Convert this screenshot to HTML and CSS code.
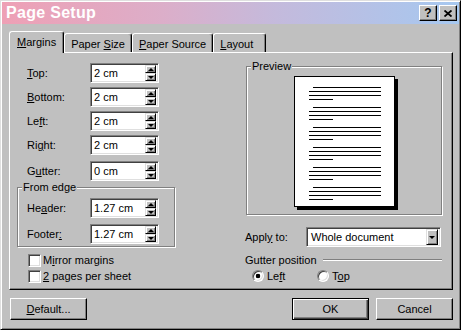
FILE: index.html
```html
<!DOCTYPE html>
<html lang="en">
<head>
    <meta charset="UTF-8">
    <title>Page Setup</title>
    <link rel="stylesheet" href="styles.css">
</head>
<body>
    <div class="dialog">
        <!-- Title bar -->
        <div class="titlebar">
            <span class="title">Page Setup</span>
            <div class="caption-buttons">
                <div class="cap-btn">?</div>
                <div class="cap-btn">
                    <svg width="8" height="7" viewBox="0 0 8 7"><path d="M0.5 0.5 L7.5 6.5 M7.5 0.5 L0.5 6.5" stroke="#000" stroke-width="1.8"/></svg>
                </div>
            </div>
        </div>

        <div class="dialog-body">
            <!-- Tabs -->
            <div class="tabs">
                <div class="tab active"><span><u>M</u>argins</span></div>
                <div class="tab"><span>Paper <u>S</u>ize</span></div>
                <div class="tab"><span><u>P</u>aper Source</span></div>
                <div class="tab last"><span><u>L</u>ayout</span></div>
            </div>

            <div class="panel">
                <!-- Left column: margins -->
                <div class="col-left">
                    <div class="field">
                        <span class="field-label"><u>T</u>op:</span>
                        <div class="spin"><span class="spin-value">2 cm</span><div class="spin-btns"><div class="spin-btn up"></div><div class="spin-btn down"></div></div></div>
                    </div>
                    <div class="field">
                        <span class="field-label"><u>B</u>ottom:</span>
                        <div class="spin"><span class="spin-value">2 cm</span><div class="spin-btns"><div class="spin-btn up"></div><div class="spin-btn down"></div></div></div>
                    </div>
                    <div class="field">
                        <span class="field-label">Le<u>f</u>t:</span>
                        <div class="spin"><span class="spin-value">2 cm</span><div class="spin-btns"><div class="spin-btn up"></div><div class="spin-btn down"></div></div></div>
                    </div>
                    <div class="field">
                        <span class="field-label">Ri<u>g</u>ht:</span>
                        <div class="spin"><span class="spin-value">2 cm</span><div class="spin-btns"><div class="spin-btn up"></div><div class="spin-btn down"></div></div></div>
                    </div>
                    <div class="field gutter">
                        <span class="field-label">G<u>u</u>tter:</span>
                        <div class="spin"><span class="spin-value">0 cm</span><div class="spin-btns"><div class="spin-btn up"></div><div class="spin-btn down"></div></div></div>
                    </div>

                    <div class="group from-edge">
                        <span class="group-label">From edge</span>
                        <div class="field">
                            <span class="field-label">He<u>a</u>der:</span>
                            <div class="spin"><span class="spin-value">1.27 cm</span><div class="spin-btns"><div class="spin-btn up"></div><div class="spin-btn down"></div></div></div>
                        </div>
                        <div class="field">
                            <span class="field-label">Footer<u>:</u></span>
                            <div class="spin"><span class="spin-value">1.27 cm</span><div class="spin-btns"><div class="spin-btn up"></div><div class="spin-btn down"></div></div></div>
                        </div>
                    </div>

                    <div class="checks">
                        <div class="check-row"><span class="checkbox"></span><span>M<u>i</u>rror margins</span></div>
                        <div class="check-row"><span class="checkbox"></span><span><u>2</u> pages per sheet</span></div>
                    </div>
                </div>

                <!-- Right column: preview -->
                <div class="col-right">
                    <div class="group preview">
                        <span class="group-label">Preview</span>
                        <div class="page">
                            <div class="para"><i class="ln first"></i><i class="ln"></i><i class="ln"></i><i class="ln short"></i></div>
                            <div class="para"><i class="ln first"></i><i class="ln"></i><i class="ln"></i><i class="ln short"></i></div>
                            <div class="para"><i class="ln first"></i><i class="ln"></i><i class="ln"></i><i class="ln short"></i></div>
                            <div class="para"><i class="ln first"></i><i class="ln"></i><i class="ln"></i><i class="ln short"></i></div>
                            <div class="para"><i class="ln first"></i><i class="ln"></i><i class="ln"></i><i class="ln short"></i></div>
                            <div class="para"><i class="ln first"></i><i class="ln"></i><i class="ln"></i><i class="ln short"></i></div>
                        </div>
                    </div>

                    <div class="apply-row">
                        <span class="apply-label">Appl<u>y</u> to:</span>
                        <div class="select">
                            <span class="select-value">Whole document</span>
                            <div class="select-btn"></div>
                        </div>
                    </div>

                    <div class="gutter-title">
                        <span>Gutter position</span>
                        <span class="etched-line"></span>
                    </div>
                    <div class="radio-row">
                        <div class="radio-opt"><span class="radio checked"></span><span>Le<u>f</u>t</span></div>
                        <div class="radio-opt"><span class="radio"></span><span>T<u>o</u>p</span></div>
                    </div>
                </div>
            </div>

            <!-- Buttons -->
            <div class="actions">
                <div class="btn"><span><u>D</u>efault...</span></div>
                <div class="btn default push">OK</div>
                <div class="btn">Cancel</div>
            </div>
        </div>
    </div>
</body>
</html>
```

FILE: styles.css
```css
/* Basic Reset */
* {
    box-sizing: border-box;
}

html, body {
    margin: 0;
    padding: 0;
}

body {
    width: 461px;
    height: 330px;
    overflow: hidden;
    background-color: #c0c0c0;
    color: #000;
    font-family: 'Liberation Sans', Arial, sans-serif;
    font-size: 11px;
}

u {
    text-decoration: underline;
    text-underline-offset: 1px;
}

/* Window frame */
.dialog {
    width: 461px;
    height: 330px;
    display: flex;
    flex-direction: column;
    padding: 1px;
    border: 1px solid;
    border-color: #dfdfdf #000 #000 #dfdfdf;
    box-shadow: inset 1px 1px #fff, inset -1px -1px #808080;
    background-color: #c0c0c0;
}

.titlebar {
    height: 22px;
    display: flex;
    align-items: center;
    justify-content: space-between;
    padding: 0 2px 0 4px;
    background: linear-gradient(to right, #eea0b5 0%, #dcaec9 35%, #c4badc 60%, #a6c8f0 100%);
}

.title {
    color: #fff;
    font-size: 16px;
    font-weight: bold;
    letter-spacing: 0.3px;
}

.caption-buttons {
    display: flex;
    gap: 2px;
}

.cap-btn {
    width: 18px;
    height: 16px;
    display: flex;
    align-items: center;
    justify-content: center;
    background-color: #c0c0c0;
    border: 1px solid;
    border-color: #fff #000 #000 #fff;
    box-shadow: inset -1px -1px #808080;
    font-size: 12px;
    font-weight: bold;
}

.dialog-body {
    flex: 1;
    display: flex;
    flex-direction: column;
    padding: 7px 6px 8px 7px;
}

/* Tabs */
.tabs {
    height: 22px;
    display: flex;
    align-items: flex-end;
    margin-bottom: -1px;
    position: relative;
    z-index: 1;
}

.tab {
    height: 19px;
    margin-bottom: 1px;
    display: flex;
    align-items: center;
    padding: 1px 6px 0;
    border: 1px solid;
    border-bottom: none;
    border-color: #fff #000 #000 #fff;
    border-radius: 3px 3px 0 0;
    box-shadow: inset -1px 0 #808080;
    background-color: #c0c0c0;
}

.tab.active {
    height: 22px;
    margin-bottom: 0;
    padding: 0 7px 2px;
}

.tab.last {
    padding-right: 12px;
}

.panel {
    flex: 1;
    display: flex;
    justify-content: space-between;
    padding: 10px 10px 0 7px;
    border: 1px solid;
    border-color: #fff #000 #000 #fff;
    box-shadow: inset -1px -1px #808080;
}

/* Left column */
.col-left {
    width: 158px;
    display: flex;
    flex-direction: column;
}

.field {
    height: 20px;
    display: flex;
    align-items: center;
    margin-bottom: 4px;
}

.field.gutter {
    margin-top: 2px;
    margin-bottom: 0;
}

.field-label {
    width: 73px;
    padding-left: 10px;
}

.spin {
    width: 69px;
    height: 20px;
    display: flex;
    align-items: center;
    background-color: #fff;
    border: 1px solid;
    border-color: #808080 #fff #fff #808080;
    box-shadow: inset 1px 1px #404040, inset -1px -1px #dfdfdf;
    padding: 1px 2px 1px 2px;
}

.spin-value {
    flex: 1;
    padding-left: 1px;
}

.spin-btns {
    width: 11px;
    height: 16px;
    display: flex;
    flex-direction: column;
}

.spin-btn {
    flex: 1;
    display: flex;
    align-items: center;
    justify-content: center;
    background-color: #c0c0c0;
    border: 1px solid;
    border-color: #dfdfdf #000 #000 #dfdfdf;
    box-shadow: inset 1px 1px #fff, inset -1px -1px #808080;
}

.spin-btn::after {
    content: '';
    border-left: 3px solid transparent;
    border-right: 3px solid transparent;
}

.spin-btn.up::after {
    border-bottom: 3px solid #000;
}

.spin-btn.down::after {
    border-top: 3px solid #000;
}

/* Etched group boxes */
.group {
    position: relative;
    border: 1px solid #808080;
    box-shadow: inset 1px 1px #fff, 1px 1px #fff;
}

.group-label {
    position: absolute;
    top: -8px;
    left: 4px;
    padding: 0 1px;
    background-color: #c0c0c0;
    line-height: 14px;
}

.from-edge {
    margin-top: 6px;
    padding: 10px 0 2px;
}

.from-edge .field {
    margin-bottom: 6px;
}

.from-edge .field:last-child {
    margin-bottom: 0;
}

.from-edge .field-label {
    width: 72px;
    padding-left: 9px;
}

.checks {
    margin-top: 5px;
}

.check-row {
    height: 16px;
    display: flex;
    align-items: center;
}

.checkbox {
    width: 13px;
    height: 13px;
    margin: 0 2px 0 11px;
    background-color: #fff;
    border: 1px solid;
    border-color: #808080 #fff #fff #808080;
    box-shadow: inset 1px 1px #404040, inset -1px -1px #dfdfdf;
}

/* Right column */
.col-right {
    width: 197px;
    display: flex;
    flex-direction: column;
}

.preview {
    width: 196px;
    height: 149px;
    margin: 3px 0 0 1px;
    display: flex;
    justify-content: center;
    padding-top: 9px;
}

.page {
    width: 101px;
    height: 131px;
    padding: 10px 0 0 14px;
    background-color: #fff;
    border: 1px solid #000;
    box-shadow: 3px 3px #000;
}

.para {
    display: flex;
    flex-direction: column;
    gap: 3px;
    margin-bottom: 7px;
}

.ln {
    display: block;
    width: 72px;
    height: 1px;
    background-color: #000;
}

.ln.first {
    width: 68px;
    margin-left: 4px;
}

.ln.short {
    width: 24px;
}

.apply-row {
    height: 20px;
    margin-top: 12px;
    display: flex;
    align-items: center;
}

.apply-label {
    width: 61px;
}

.select {
    width: 135px;
    height: 20px;
    display: flex;
    align-items: center;
    padding: 1px 2px;
    background-color: #fff;
    border: 1px solid;
    border-color: #808080 #fff #fff #808080;
    box-shadow: inset 1px 1px #404040, inset -1px -1px #dfdfdf;
}

.select-value {
    flex: 1;
    padding-left: 2px;
}

.select-btn {
    width: 12px;
    height: 16px;
    display: flex;
    align-items: center;
    justify-content: center;
    background-color: #c0c0c0;
    border: 1px solid;
    border-color: #dfdfdf #000 #000 #dfdfdf;
    box-shadow: inset 1px 1px #fff, inset -1px -1px #808080;
}

.select-btn::after {
    content: '';
    border-left: 3px solid transparent;
    border-right: 3px solid transparent;
    border-top: 3px solid #000;
}

.gutter-title {
    height: 14px;
    margin-top: 6px;
    display: flex;
    align-items: center;
}

.etched-line {
    flex: 1;
    height: 2px;
    margin-left: 6px;
    border-top: 1px solid #808080;
    border-bottom: 1px solid #fff;
}

.radio-row {
    height: 14px;
    margin-top: 2px;
    display: flex;
    align-items: center;
    padding-left: 7px;
}

.radio-opt {
    width: 65px;
    display: flex;
    align-items: center;
}

.radio {
    width: 12px;
    height: 12px;
    margin-right: 3px;
    border-radius: 50%;
    background-color: #fff;
    border: 1px solid;
    border-color: #808080 #fff #fff #808080;
    box-shadow: inset 1px 1px #404040, inset -1px -1px #dfdfdf;
}

.radio.checked {
    background: radial-gradient(circle, #000 2px, #fff 2.6px);
}

/* Bottom buttons */
.actions {
    height: 22px;
    margin-top: 8px;
    display: flex;
    gap: 7px;
}

.btn {
    width: 77px;
    height: 22px;
    display: flex;
    align-items: center;
    justify-content: center;
    background-color: #c0c0c0;
    border: 1px solid;
    border-color: #fff #000 #000 #fff;
    box-shadow: inset -1px -1px #808080;
}

.btn:first-child {
    margin-left: 1px;
}

.btn.default {
    border-color: #000;
    box-shadow: inset 1px 1px #fff, inset -1px -1px #404040, inset -2px -2px #808080;
}

.btn.push {
    margin-left: auto;
}
```
